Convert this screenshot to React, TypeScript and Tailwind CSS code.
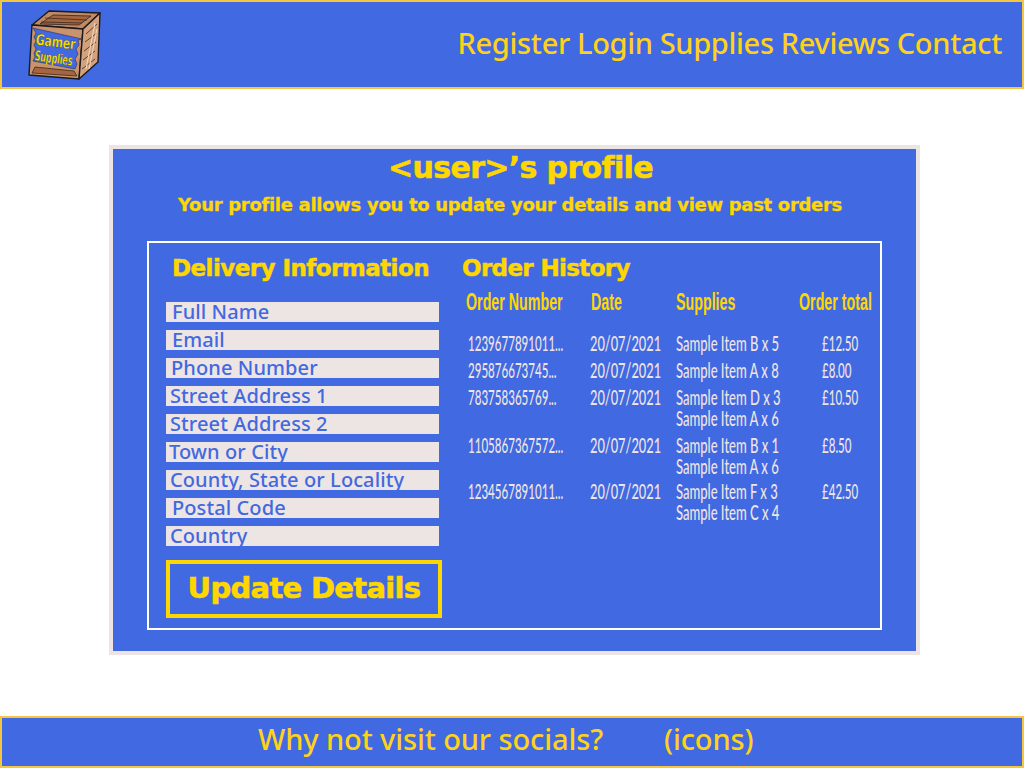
import type { ReactNode } from 'react';

const navLinks = ['Register', 'Login', 'Supplies', 'Reviews', 'Contact'];

const fields = [
  { label: 'Full Name', className: 'pl-[6px]' },
  { label: 'Email', className: 'pl-[6px]' },
  { label: 'Phone Number', className: 'pl-[5px]' },
  { label: 'Street Address 1', className: 'pl-[4px]' },
  { label: 'Street Address 2', className: 'pl-[4px]' },
  { label: 'Town or City', className: 'pl-[3px]' },
  { label: 'County, State or Locality', className: 'pl-[4px]' },
  { label: 'Postal Code', className: 'pl-[6px]' },
  { label: 'Country', className: 'pl-[4px]' },
];

const orders = [
  { number: '1239677891011...', date: '20/07/2021', items: ['Sample Item B x 5'], total: '£12.50', rowClass: 'h-[27px]' },
  { number: '295876673745...', date: '20/07/2021', items: ['Sample Item A x 8'], total: '£8.00', rowClass: 'h-[27px]' },
  { number: '783758365769...', date: '20/07/2021', items: ['Sample Item D x 3', 'Sample Item A x 6'], total: '£10.50', rowClass: 'h-[48px]' },
  { number: '1105867367572...', date: '20/07/2021', items: ['Sample Item B x 1', 'Sample Item A x 6'], total: '£8.50', rowClass: 'h-[46px]' },
  { number: '1234567891011...', date: '20/07/2021', items: ['Sample Item F x 3', 'Sample Item C x 4'], total: '£42.50', rowClass: 'h-[48px]' },
];

// no condensed family is installed, so squeeze the text horizontally
function Narrow({ className, children }: { className: string; children: ReactNode }) {
  return (
    <span className={`inline-block origin-left whitespace-nowrap ${className}`}>{children}</span>
  );
}

function CrateLogo() {
  return (
    <svg width="76" height="72" viewBox="0 0 76 72" aria-label="Gamer Supplies">
      <g stroke="#1c1a1e" strokeWidth="1.4" strokeLinejoin="round">
        <path d="M5 16 L22 2 L73 4 L56 20 Z" fill="#c08a63" />
        <path d="M13 15 L26 6 L64 7 L52 16 Z" fill="#a5653f" strokeWidth="0.7" />
        <path d="M5 16 L56 20 L52 70 L2 66 Z" fill="#c9936d" />
        <path d="M56 20 L73 4 L71 53 L52 70 Z" fill="#d3a27d" />
      </g>
      <g stroke="#3b2a22" strokeWidth="0.8" fill="none">
        <path d="M18 9 L60 11 M14 13 L55 14 M59 25 L70 15 M58 33 L70 24 M57 42 L69 33 M56 51 L68 42 M55 60 L68 50" />
        <path d="M59 60 L68 14 M62 60 L70 20" stroke="#f0d3ba" strokeWidth="1.2" />
        <path d="M8 58 L47 62 L50 67 L5 64 Z" fill="#a5653f" />
      </g>
      <path
        d="M6 19 L9 24 L7 28 L9 32 L7 36 L9 40 L7 44 L8 48 L6 52 L48 60 L50 55 L48 50 L51 45 L49 40 L52 36 L51 31 L55 30 Z"
        fill="#4169e1"
        stroke="#24325f"
        strokeWidth="0.6"
      />
      <text
        x="28"
        y="38"
        textAnchor="middle"
        transform="rotate(7 28 38)"
        fill="#ffe000"
        stroke="#1c1a1e"
        strokeWidth="0.3"
        fontFamily="'DejaVu Sans', sans-serif"
        fontWeight="700"
        fontSize="15"
        textLength="40"
        lengthAdjust="spacingAndGlyphs"
      >
        Gamer
      </text>
      <text
        x="26"
        y="54"
        textAnchor="middle"
        transform="rotate(8 26 54)"
        fill="#ffe000"
        stroke="#1c1a1e"
        strokeWidth="0.3"
        fontFamily="'DejaVu Sans', sans-serif"
        fontWeight="700"
        fontSize="14"
        textLength="38"
        lengthAdjust="spacingAndGlyphs"
      >
        Supplies
      </text>
    </svg>
  );
}

export default function App() {
  return (
    <div className="flex h-[768px] flex-col bg-white font-['Lato',sans-serif]">
      <header className="flex h-[89px] items-center justify-between border-2 border-[#f5c542] bg-[#4169e1] pl-[25px] pr-[20px]">
        <CrateLogo />
        <nav className="flex gap-[7px] pb-[3px] font-['Noto_Sans',sans-serif] text-[29px] font-medium tracking-[-0.3px] text-[#ffd21a]">
          {navLinks.map((link) => (
            <a key={link} href="#">
              {link}
            </a>
          ))}
        </nav>
      </header>

      <main className="ml-[109px] mt-[56px] h-[510px] w-[811px] border-4 border-[#ede4e4] bg-[#4169e1] pt-[1px]">
        <h1 className="h-[36px] pl-[12px] text-center font-['DejaVu_Sans',sans-serif] text-[30px] leading-[36px] font-bold tracking-[-0.65px] text-[#ffd700] [-webkit-text-stroke:0.6px_#ffd700]">
          &lt;user&gt;’s profile
        </h1>
        <p className="mt-[4px] pr-[9px] text-center font-['DejaVu_Sans',sans-serif] text-[18px] leading-[30px] font-bold tracking-[-0.3px] text-[#ffd700] [-webkit-text-stroke:0.3px_#ffd700]">
          Your profile allows you to update your details and view past orders
        </p>

        <div className="mx-[34px] mt-[21px] flex h-[389px] border-2 border-white">
          <section className="ml-[17px] w-[276px]">
            <h2 className="mt-[9px] pr-[7px] text-center font-['DejaVu_Sans',sans-serif] text-[23px] leading-[32px] font-bold tracking-[-0.55px] text-[#ffd700] [-webkit-text-stroke:0.5px_#ffd700]">
              Delivery Information
            </h2>
            <form className="mt-[18px]">
              <div className="flex w-[273px] flex-col gap-[8px]">
                {fields.map((field) => (
                  <input
                    key={field.label}
                    placeholder={field.label}
                    className={`h-[20px] w-full bg-[#ede4e4] pb-[2px] font-['Noto_Sans',sans-serif] text-[20px] leading-[18px] font-medium tracking-[0.1px] outline-none placeholder:text-[#4169e1] ${field.className}`}
                  />
                ))}
              </div>
              <button
                type="button"
                className="mt-[14px] h-[58px] w-[276px] border-4 border-[#ffd700] font-['DejaVu_Sans',sans-serif] text-[29px] font-bold tracking-[-0.7px] text-[#ffd700] [-webkit-text-stroke:0.6px_#ffd700]"
              >
                Update Details
              </button>
            </form>
          </section>

          <section className="ml-[20px] flex-1">
            <h2 className="mt-[9px] font-['DejaVu_Sans',sans-serif] text-[23px] leading-[32px] font-bold tracking-[-0.65px] text-[#ffd700] [-webkit-text-stroke:0.5px_#ffd700]">
              Order History
            </h2>
            <div className="mt-[1px] ml-[2px] grid h-[31px] grid-cols-[125px_85px_123px_76px] items-center pl-[2px] font-['Liberation_Sans',sans-serif] text-[23px] font-bold text-[#ffd700]">
              <Narrow className="scale-x-[0.62]">Order Number</Narrow>
              <Narrow className="scale-x-[0.62]">Date</Narrow>
              <Narrow className="scale-x-[0.62]">Supplies</Narrow>
              <Narrow className="scale-x-[0.62]">Order total</Narrow>
            </div>
            <div className="mt-[16px] ml-[2px] pl-[4px] font-['Lato',sans-serif] text-[21px] leading-[21px] font-medium text-[#ede4e4]">
              {orders.map((order) => (
                <div
                  key={order.number}
                  className={`grid grid-cols-[122px_86px_146px_60px] ${order.rowClass}`}
                >
                  <span>
                    <Narrow className="scale-x-[0.55]">{order.number}</Narrow>
                  </span>
                  <span>
                    <Narrow className="scale-x-[0.61]">{order.date}</Narrow>
                  </span>
                  <span>
                    {order.items.map((item) => (
                      <span key={item} className="block">
                        <Narrow className="scale-x-[0.62]">{item}</Narrow>
                      </span>
                    ))}
                  </span>
                  <span>
                    <Narrow className="scale-x-[0.55]">{order.total}</Narrow>
                  </span>
                </div>
              ))}
            </div>
          </section>
        </div>
      </main>

      <footer className="mt-auto flex h-[52px] items-center border-2 border-[#f5c542] bg-[#4169e1] pb-[6px] pl-[256px] font-['Noto_Sans',sans-serif] text-[29px] font-medium tracking-[-0.1px] text-[#ffd21a]">
        <span>Why not visit our socials?</span>
        <span className="ml-[61px]">(icons)</span>
      </footer>
    </div>
  );
}
